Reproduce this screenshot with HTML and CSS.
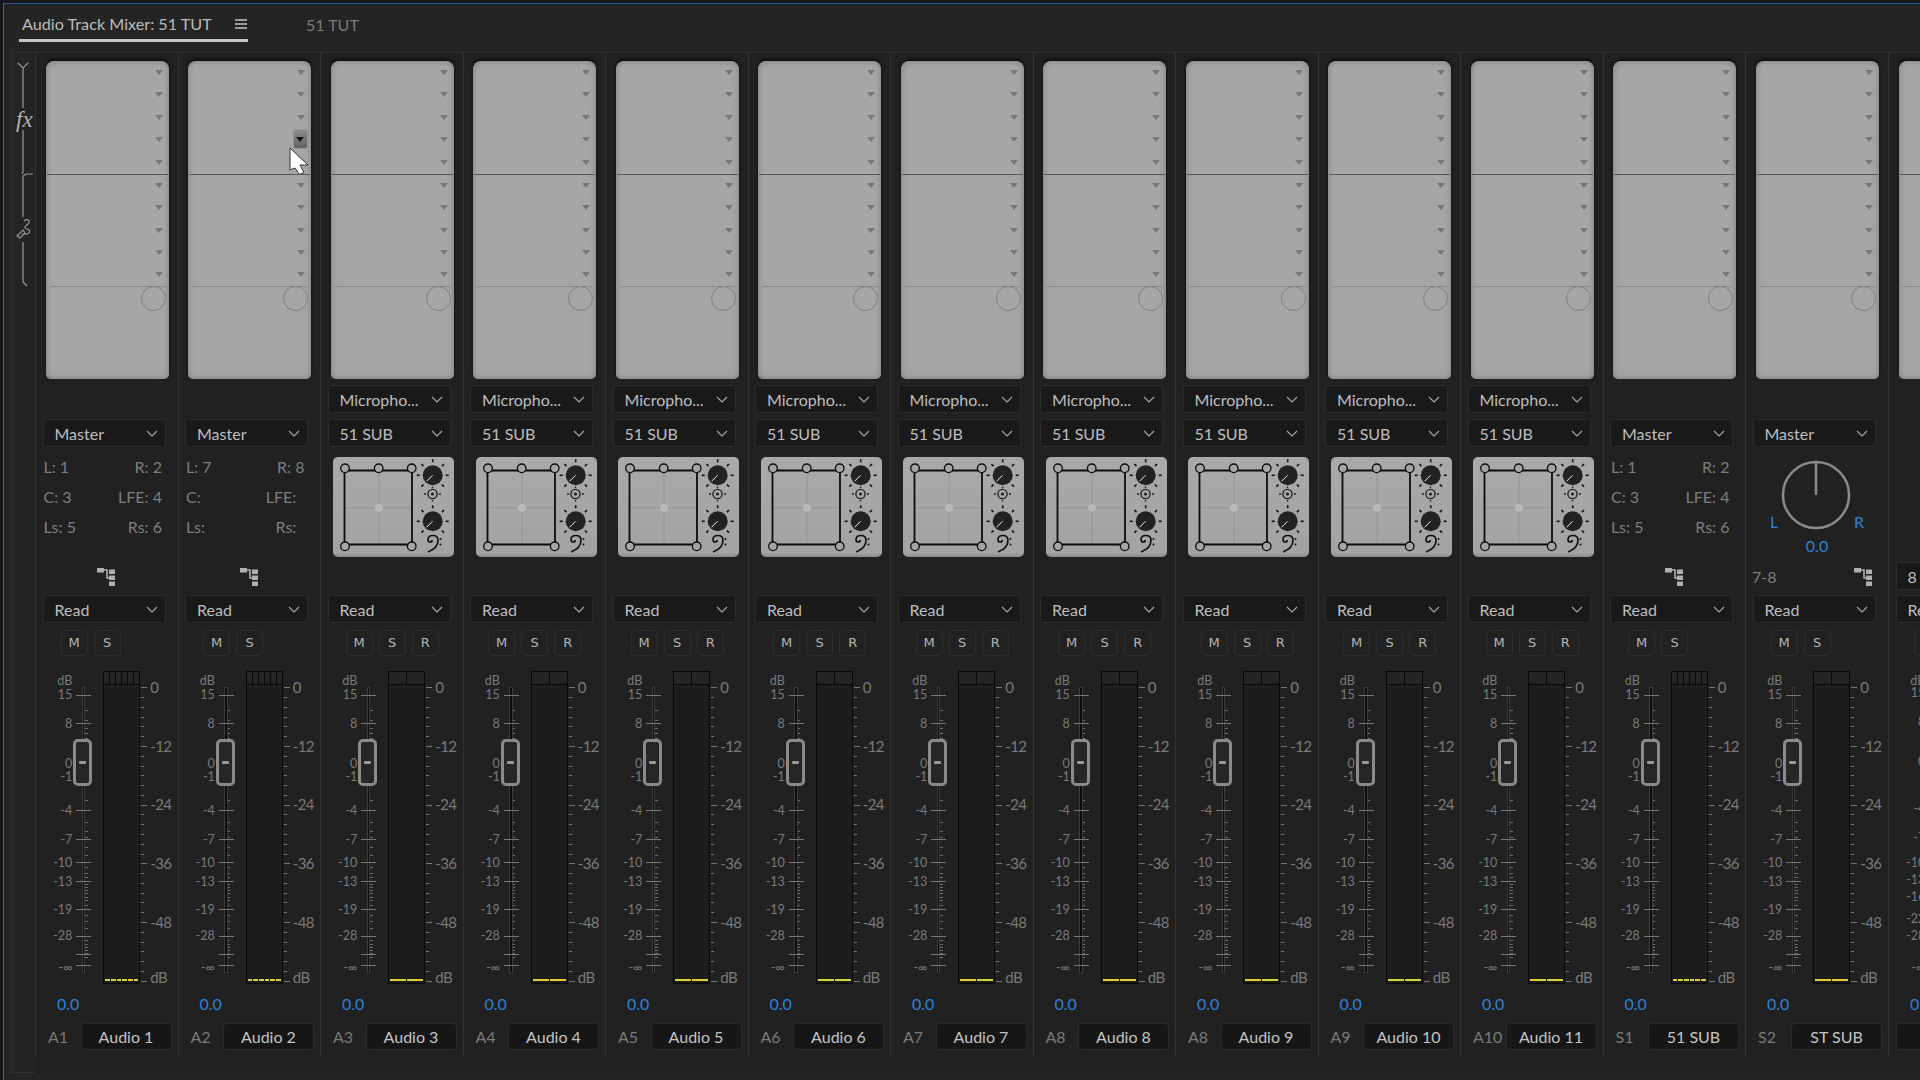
FILE: index.html
```html
<!DOCTYPE html>
<html lang="en">
<head>
  <meta charset="UTF-8" />
  <meta name="viewport" content="width=device-width, initial-scale=1" />
  <title>Audio Track Mixer</title>
  <link rel="stylesheet" href="styles.css">
</head>
<body>

  <div class="panel">
    <div class="tabs">
      <div class="tab active">
        <span>Audio Track Mixer: 51 TUT</span>
        <svg class="menu-icon" width="12" height="10" viewBox="0 0 12 10"><path d="M0 1h12M0 5h12M0 9h12" stroke="#c4c4c4" stroke-width="1.3"/></svg>
      </div>
      <div class="tab">51 TUT</div>
    </div>

    <div class="mixer">
      <div class="rack-legend">
        <svg width="23" height="240" viewBox="0 0 23 240" fill="none" stroke="#9a9a9a" stroke-width="1.2">
          <path d="M6 10l5 5 5-5M11 15v40M11 77v42l-1 2M21 121h-7l-3 2v41M11 189v40l4 4"/>
          <path d="M5 183l6-6 2 3-5 5zM12 168c4-3 7 0 4 3s-5 4-1 5 3 5-1 5-4 0-4 0" stroke-width="1.1"/>
        </svg>
        <span class="fx-label">fx</span>
      </div>
      <div class="strips" id="strips"></div>
    </div>
  </div>

  <script src="script.js"></script>
</body>
</html>
```

FILE: styles.css
```css
* {
  box-sizing: border-box;
}

body {
  margin: 0;
  width: 1920px;
  height: 1080px;
  overflow: hidden;
  background: #16181b;
  font-family: Lato, "Liberation Sans", sans-serif;
  font-size: 16px;
  color: #c4c4c4;
}

.panel {
  margin: 3px 0 0 3px;
  height: 1077px;
  background: #242424;
  border-top: 1px solid #1f5a96;
  border-left: 1px solid #2a6bad;
  overflow: hidden;
}

.tabs {
  display: flex;
  height: 48px;
  padding-left: 15px;
}

.tab {
  height: 38px;
  line-height: 42px;
  color: #7b7b7b;
  font-size: 16px;
  margin-left: 58px;
}

.tab.active {
  display: flex;
  align-items: center;
  justify-content: space-between;
  width: 229px;
  margin-left: 0;
  padding: 5px 0 0 3px;
  color: #bdbdbd;
  font-size: 16.2px;
  border-bottom: 3px solid #c6c6c6;
}

.menu-icon {
  margin-right: 1px;
}

.mixer {
  display: flex;
  margin-left: 7px;
}

.rack-legend {
  position: relative;
  flex: 0 0 23px;
  height: 1021px;
  border: 1px solid #2f2f2f;
  border-right: none;
}

.rack-legend svg {
  display: block;
}

.fx-label {
  position: absolute;
  left: 4px;
  top: 54px;
  font-family: "Liberation Serif", serif;
  font-style: italic;
  font-size: 23px;
  line-height: 26px;
  color: #b4b4b4;
}

.strips {
  display: flex;
  background: #212121;
}

.strip {
  flex: 0 0 142.5px;
  height: 1004px;
  border-left: 1px solid #323232;
  border-top: 1px solid #2f2f2f;
}

/* effects and sends rack */
.rack {
  position: relative;
  width: 123px;
  height: 318px;
  margin: 8px 0 0 9.7px;
  background: #a6a6a6;
  border-radius: 8px 8px 5px 5px;
  box-shadow: inset 0 0 6px #7a7a7a, 0 -2px 3px #0c0c0c;
}

.slots {
  display: flex;
  flex-direction: column;
  align-items: flex-end;
  height: 112.5px;
  padding-right: 6px;
}

.slots + .slots {
  border-top: 1px solid #575757;
  margin: 0 1px;
  width: 121px;
  padding-right: 5px;
}

.slot {
  flex: 1;
  display: flex;
  align-items: center;
}

.slot::after {
  content: "";
  border: 4px solid transparent;
  border-top: 5px solid #777;
  border-bottom: none;
}

.send-area {
  position: absolute;
  left: 2px;
  right: 2px;
  top: 225px;
  height: 12px;
  border: 1.5px solid #8a8a8a;
  border-bottom: none;
  border-radius: 5px 5px 0 0;
  border-left-color: transparent;
  border-right-color: transparent;
}

.send-knob {
  position: absolute;
  left: 95px;
  top: 225px;
  width: 25px;
  height: 25px;
  border: 1.5px solid #818181;
  border-radius: 50%;
  background: #a6a6a6;
}

.slot-button {
  position: absolute;
  left: 104.5px;
  top: 68px;
  width: 15px;
  height: 20px;
  display: flex;
  align-items: center;
  justify-content: center;
  background: linear-gradient(#8d8d8d, #616161);
  border: 1px solid #949494;
  border-radius: 3px;
}

.slot-button::after {
  content: "";
  border: 4px solid transparent;
  border-top: 5px solid #111;
  border-bottom: none;
}

.cursor {
  position: absolute;
  left: 100.5px;
  top: 86px;
}

/* dropdowns */
.select {
  display: flex;
  align-items: center;
  justify-content: space-between;
  width: 123px;
  height: 28px;
  margin: 6px 0 0 6.5px;
  padding: 0 7px 0 11px;
  background: #191919;
  border: 1px solid #2c2c2c;
  border-radius: 3px;
  color: #bebebe;
  font-size: 16px;
}

.select.blank {
  visibility: hidden;
}

.routing {
  display: flow-root;
  height: 114px;
}

.channel-map {
  display: grid;
  grid-template-columns: 1fr auto;
  padding: 5px 0 0 7.5px;
  width: 126px;
  line-height: 30px;
  color: #7e7e7e;
  white-space: pre;
}

.channel-map span:nth-child(even) {
  text-align: right;
}

.panner {
  display: block;
  margin: 9.5px 0 0 12px;
}

.pan {
  display: flex;
  flex-wrap: wrap;
  justify-content: center;
  align-items: flex-end;
  width: 142px;
  padding-top: 13px;
  color: #2f80d6;
}

.pan svg {
  margin: 0 3px;
}

.pan span {
  line-height: 20px;
  margin-bottom: -2px;
}

.pan .pan-value {
  flex: 0 0 100%;
  text-align: center;
  margin: 6px 0 0;
}

.route-row {
  display: flex;
  align-items: center;
  justify-content: space-between;
  height: 29px;
  padding: 2px 16px 0 6px;
  color: #7e7e7e;
}

.route-row.centered {
  justify-content: flex-start;
  padding-left: 61px;
}

.route-row .select {
  margin: -1px 0 0 0.5px;
  flex: 0 0 123px;
}

.route-row + .select {
  margin-top: 5px;
}

/* mute, solo, record */
.msr {
  display: flex;
  gap: 6px;
  height: 33px;
  padding: 7px 0 0 24.7px;
}

.msr span {
  width: 27px;
  height: 26px;
  line-height: 24px;
  text-align: center;
  border: 1px solid #2d2d2d;
  border-radius: 4px;
  font-family: "DejaVu Sans", sans-serif;
  font-size: 13px;
  color: #b4b4b4;
}

/* fader and meter */
.levels {
  display: flex;
  height: 338px;
}

.fader {
  position: relative;
  flex: 0 0 67.3px;
}

.fader-label,
.scale-label {
  position: absolute;
  transform: translateY(-50%);
  line-height: 16px;
  color: #7a7a7a;
  white-space: nowrap;
}

.fader-label {
  right: 31px;
  font-size: 12.5px;
}

.track {
  position: absolute;
  left: 45.5px;
  top: 31px;
  width: 3.5px;
  height: 286px;
  background: #0c0c0c;
  border: 1px solid #3c3c3c;
}

.fader-tick {
  position: absolute;
  left: 40px;
  width: 15px;
  height: 1px;
  background: #787878;
}

.fader-dot {
  position: absolute;
  left: 49px;
  width: 2.5px;
  height: 1px;
  background: #6e6e6e;
}

.handle {
  position: absolute;
  left: 37.3px;
  top: 83.3px;
  display: flex;
  align-items: center;
  justify-content: center;
  width: 19px;
  height: 47px;
  background: #262626;
  border: 3px solid #8a8a8a;
  border-radius: 5px;
}

.handle::after {
  content: "";
  width: 7px;
  height: 3px;
  background: #9a9a9a;
  border-radius: 1px;
}

.meter {
  display: flex;
  flex-direction: column;
  flex: 0 0 37px;
  height: 313px;
  margin-top: 14.7px;
  background: #1d1d1d;
  border: 1px solid #080808;
}

.clip,
.signal {
  display: flex;
}

.clip {
  height: 13px;
  border-bottom: 1px solid #080808;
  background: #242424;
  margin-bottom: auto;
}

.clip span {
  flex: 1;
  border-left: 1px solid #080808;
}

.clip span:first-child {
  border-left: none;
}

.signal {
  gap: 1px;
  height: 2px;
  margin: 0 1px 2px;
}

.signal span {
  flex: 1;
  background: #d9cf3a;
}

.meter-scale {
  position: relative;
  flex: 1;
}

.scale-tick {
  position: absolute;
  left: 1px;
  width: 3px;
  height: 1px;
  background: #757575;
}

.scale-tick.major {
  width: 6px;
}

.scale-label {
  left: 10px;
  font-size: 15px;
  letter-spacing: -0.6px;
}

.gain {
  height: 20px;
  line-height: 20px;
  padding-left: 21px;
  color: #2f80d6;
}

/* track name */
.name-row {
  display: flex;
  align-items: center;
  justify-content: space-between;
  height: 27px;
  margin-top: 9px;
  padding: 0 6px 0 12px;
  color: #7a7a7a;
}

.name-row.no-id {
  padding-left: 6.5px;
}

.name-box {
  flex: 0 0 91px;
  height: 27px;
  line-height: 25px;
  text-align: center;
  background: #161616;
  border: 1px solid #2b2b2b;
  border-radius: 4px;
  color: #c4c4c4;
}
```

FILE: script.js
```js
const FADER_TOP = 656;
const SCALE_TOP = 670.7;

const chevron = '<svg width="12" height="7" viewBox="0 0 12 7" fill="none"><path d="M1 1l5 5 5-5" stroke="#a8a8a8" stroke-width="1.1"/></svg>';
const routeIcon = '<svg width="18" height="18" viewBox="0 0 18 18" fill="#b0b0b0"><rect width="7" height="4.5"/><path d="M7 2h3v8h2" fill="none" stroke="#b0b0b0" stroke-width="1.6"/><rect x="12" y="1.5" width="6" height="4.5"/><rect x="12" y="7.5" width="6" height="4.5"/><rect x="12" y="13.5" width="6" height="4.5"/></svg>';

const faderLabels = [
  ['15', 695], ['8', 723.5], ['0', 763.5], ['-1', 776.5], ['-4', 811], ['-7', 840],
  ['-10', 862.5], ['-13', 881.5], ['-19', 910], ['-28', 936], ['-∞', 968]
];
const lastStripLabels = [
  ['15', 693], ['8', 722], ['0', 762], ['-4', 809], ['-7', 838], ['-10', 863],
  ['-13', 880], ['-16', 897], ['-22', 919], ['-28', 936], ['-∞', 968]
];
const faderTicks = [695, 723, 763, 810, 839, 862, 881, 909, 936, 954, 965];
const faderDots = [710, 720, 728, 733, 738, 800, 822, 831, 837, 847, 855, 867, 873, 877, 884, 887, 890, 893, 897, 900, 905, 915, 921, 928, 940, 944, 947, 950, 953, 957];

const tracks = [
  { id: 'A1', name: 'Audio 1', output: 'Master', meter: 6, map: ['L: 1', 'R: 2', 'C: 3', 'LFE: 4', 'Ls: 5', 'Rs: 6'] },
  { id: 'A2', name: 'Audio 2', output: 'Master', meter: 6, map: ['L: 7', 'R: 8', 'C:', 'LFE:  ', 'Ls:', 'Rs:  '], button: true },
  { id: 'A3', name: 'Audio 3' },
  { id: 'A4', name: 'Audio 4' },
  { id: 'A5', name: 'Audio 5' },
  { id: 'A6', name: 'Audio 6' },
  { id: 'A7', name: 'Audio 7' },
  { id: 'A8', name: 'Audio 8' },
  { id: 'A8', name: 'Audio 9' },
  { id: 'A9', name: 'Audio 10' },
  { id: 'A10', name: 'Audio 11' },
  { id: 'S1', name: '51 SUB', output: 'Master', meter: 6, map: ['L: 1', 'R: 2', 'C: 3', 'LFE: 4', 'Ls: 5', 'Rs: 6'] },
  { id: 'S2', name: 'ST SUB', output: 'Master', meter: 2, pan: true },
  { id: '', name: '', output: 'Master', meter: 2, pan: true, last: true }
];

function select(text, blank) {
  if (blank) return '<div class="select blank"></div>';
  return `<div class="select"><span>${text}</span>${chevron}</div>`;
}

function knob(cy) {
  let rays = '';
  for (const angle of [0, 45, 90, 135, 225, 270, 315]) {
    rays += `<path d="M99.7 ${cy - 13}v-3" stroke="#111" stroke-width="1.6" transform="rotate(${angle} 99.7 ${cy})"/>`;
  }
  return `${rays}<circle cx="99.7" cy="${cy}" r="10" fill="#222"/><path d="M93.5 ${cy + 6}l6-6" stroke="#eee" stroke-width="1"/>`;
}

function panner() {
  let corners = '';
  for (const [x, y] of [[12, 11.3], [45.7, 11.3], [78.7, 11.3], [12, 89.3], [78.7, 89.3]]) {
    corners += `<circle cx="${x}" cy="${y}" r="4.3" fill="#a5a5a5" stroke="#0c0c0c" stroke-width="1.3"/>`;
  }
  return `<svg class="panner" width="121" height="100" viewBox="0 0 121 100">
    <defs><linearGradient id="panner-bg" x1="0" y1="0" x2="0" y2="1"><stop offset="0" stop-color="#a9a9a9"/><stop offset="0.96" stop-color="#a3a3a3"/><stop offset="1" stop-color="#8b8b8b"/></linearGradient></defs>
    <rect width="121" height="100" rx="5" fill="url(#panner-bg)"/>
    <path d="M46 14v73M12 50.7h67" stroke="#949494"/>
    <path d="M11.500 13.500h68M11.500 13.500v74M79 13.500v74M11.500 87.500h68" stroke="#0c0c0c" stroke-width="1.800" fill="none"/>
    ${corners}
    <circle cx="46" cy="50.7" r="4" fill="#b9b9b9"/>
    ${knob(18.3)}
    <circle cx="99.5" cy="37" r="4.6" fill="none" stroke="#222" stroke-width="1.4"/>
    <circle cx="99.5" cy="37" r="1.6" fill="#222"/>
    <path d="M91 37h2M106 37h2M99.5 29.5v1.5M99.5 43v1.5" stroke="#222" stroke-width="1.4"/>
    ${knob(64.3)}
    <path d="M95 95c5-2 10-6 10-11.500 0-3-2-5-5-5s-5 1.500-5 4c0 1.500 1 2.500 2.200 2.500s2-1 2-2" fill="none" stroke="#111" stroke-width="1.700"/>
    <circle cx="107.500" cy="82" r="1" fill="#111"/><circle cx="107.500" cy="87.500" r="1" fill="#111"/>
  </svg>`;
}

function pan() {
  return `<div class="pan"><span>L</span>
    <svg width="70" height="70" viewBox="0 0 70 70" fill="none" stroke="#8a8a8a" stroke-width="2.500"><circle cx="35" cy="35" r="33"/><path d="M35 2v33"/></svg>
    <span>R</span><span class="pan-value">0.0</span></div>`;
}

function routingBlock(t) {
  if (t.map) return `<div class="channel-map">${t.map.map(m => `<span>${m}</span>`).join('')}</div>`;
  if (t.pan) return t.last ? '' : pan();
  return panner();
}

function routeRow(t) {
  if (t.last) return `<div class="route-row">${select('8')}</div>`;
  if (t.pan) return `<div class="route-row"><span>7-8</span>${routeIcon}</div>`;
  if (t.map) return `<div class="route-row centered">${routeIcon}</div>`;
  return '<div class="route-row"></div>';
}

function fader(t) {
  let html = `<span class="fader-label" style="top:${681 - FADER_TOP}px">dB</span><div class="track"></div>`;
  for (const [text, y] of (t.last ? lastStripLabels : faderLabels)) {
    html += `<span class="fader-label" style="top:${y - FADER_TOP}px">${text}</span>`;
  }
  for (const y of faderTicks) html += `<div class="fader-tick" style="top:${y - FADER_TOP}px"></div>`;
  for (const y of faderDots) html += `<div class="fader-dot" style="top:${y - FADER_TOP}px"></div>`;
  return `<div class="fader">${html}<div class="handle"></div></div>`;
}

function meter(count) {
  const cells = '<span></span>'.repeat(count);
  return `<div class="meter"><div class="clip">${cells}</div><div class="signal">${cells}</div></div>`;
}

function meterScale() {
  let html = '';
  for (let i = 0; i <= 30; i++) {
    const y = 687.3 + i * 9.78 - SCALE_TOP + 14.7;
    html += `<div class="scale-tick${i % 6 === 0 ? ' major' : ''}" style="top:${y}px"></div>`;
  }
  ['0', '-12', '-24', '-36', '-48'].forEach((text, i) => {
    html += `<span class="scale-label" style="top:${687 + i * 58.7 - FADER_TOP}px">${text}</span>`;
  });
  html += `<span class="scale-label" style="top:${976.5 - FADER_TOP}px">dB</span>`;
  return `<div class="meter-scale">${html}</div>`;
}

function rack(t) {
  const slots = '<div class="slot"></div>'.repeat(5);
  const extra = t.button
    ? `<div class="slot-button"></div>
       <svg class="cursor" width="20" height="28" viewBox="0 0 20 28"><path d="M1 1v22l5-2 4.500 6.500 4.500-2-4-7.500h8z" fill="#fff" stroke="#333" stroke-width="1"/></svg>`
    : '';
  return `<div class="rack"><div class="slots">${slots}</div><div class="slots">${slots}</div>
    <div class="send-area"></div><div class="send-knob"></div>${extra}</div>`;
}

function nameRow(t) {
  if (!t.id) return '<div class="name-row no-id"><div class="name-box"></div></div>';
  return `<div class="name-row"><span>${t.id}</span><div class="name-box">${t.name}</div></div>`;
}

function strip(t) {
  const buttons = t.map || t.pan ? ['M', 'S'] : ['M', 'S', 'R'];
  return `<div class="strip">
    ${rack(t)}
    ${select('Micropho...', t.output)}
    ${select(t.output || '51 SUB', t.last)}
    <div class="routing">${routingBlock(t)}</div>
    ${routeRow(t)}
    ${select('Read')}
    <div class="msr">${buttons.map(b => `<span>${b}</span>`).join('')}</div>
    <div class="levels">${fader(t)}${meter(t.meter || 2)}${meterScale()}</div>
    <div class="gain">0.0</div>
    ${nameRow(t)}
  </div>`;
}

document.getElementById('strips').innerHTML = tracks.map(strip).join('');
```
